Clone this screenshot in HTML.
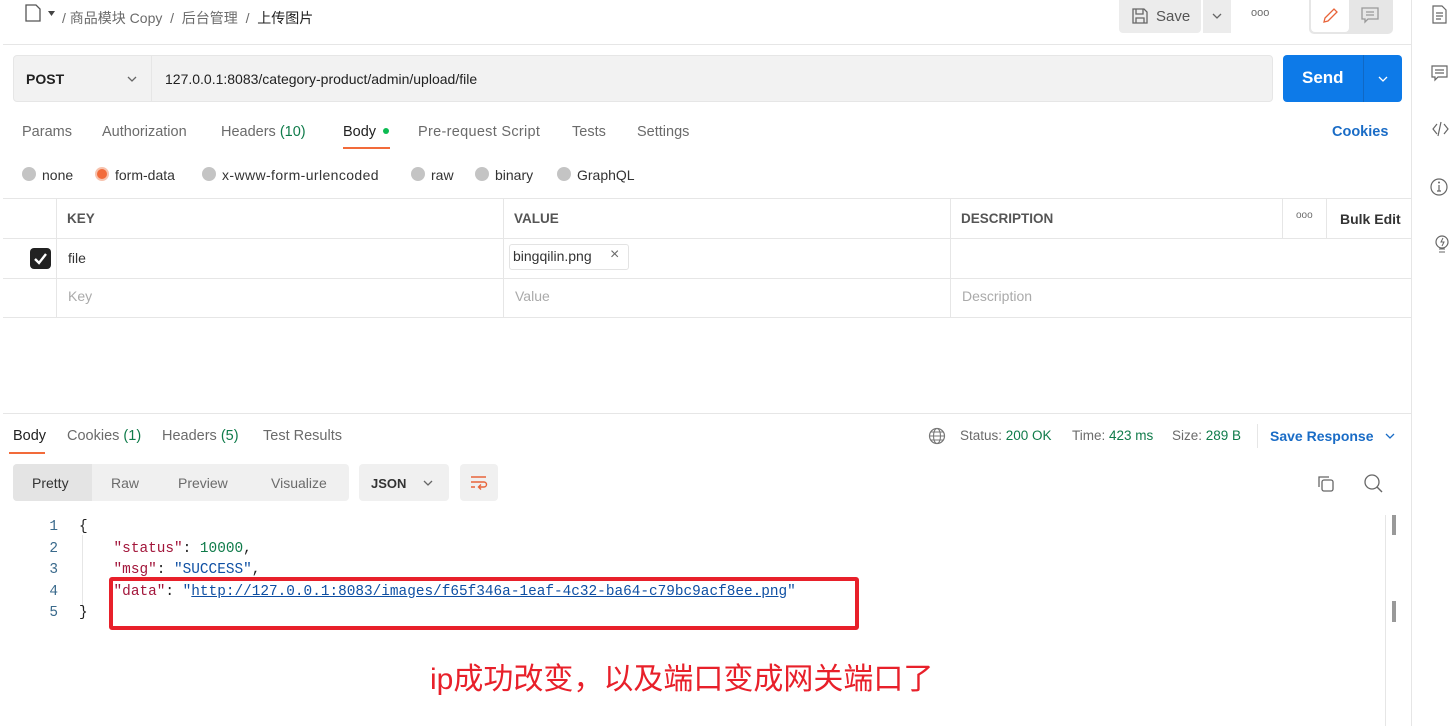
<!DOCTYPE html>
<html><head><meta charset="utf-8">
<style>
*{box-sizing:border-box;margin:0;padding:0}
body{width:1450px;height:726px;overflow:hidden;background:#fff;font-family:"Liberation Sans","Noto Sans CJK SC",sans-serif;color:#212121;position:relative;font-size:14px}
.a{position:absolute;white-space:nowrap}
.g{color:#6b6b6b}
.gr{color:#0f7b4a}
.mono{font-family:"Liberation Mono",monospace;font-size:14.4px}
.hl{border-top:1px solid #e6e6e6}
.vl{border-left:1px solid #e6e6e6}
.radio{position:absolute;width:14px;height:14px;border-radius:50%;background:#c4c4c4}
</style></head><body>
<svg width="0" height="0" style="position:absolute"><defs><path id="chev" d="M1 1l4 4 4-4" fill="none" stroke-width="1.3"/></defs></svg>
<!-- top bar -->
<svg class="a" style="left:24px;top:4px" width="40" height="20" viewBox="0 0 40 20"><path d="M2 1h10l4 4v12H2z" fill="none" stroke="#555" stroke-width="1.3"/><path d="M24 7l7 0l-3.5 5z" fill="#444"/></svg>
<div class="a g" style="left:62px;top:8px;font-size:14px">/ 商品模块 Copy &nbsp;/ &nbsp;后台管理 &nbsp;/ &nbsp;<span style="color:#212121">上传图片</span></div>
<div class="a" style="left:1119px;top:0;width:82px;height:33px;background:#ececec;border-radius:0 0 4px 4px"></div>
<svg class="a" style="left:1131px;top:7px" width="18" height="18" viewBox="0 0 18 18"><path d="M2 2h11l3 3v11H2z M5 2v5h7V2 M5 16v-5h8v5" fill="none" stroke="#666" stroke-width="1.3"/></svg>
<div class="a g" style="left:1156px;top:8px;font-size:15px;color:#555">Save</div>
<div class="a" style="left:1203px;top:0;width:28px;height:33px;background:#ececec"></div>
<svg class="a" style="left:1212px;top:13px" width="10" height="7"><use href="#chev" stroke="#666"/></svg>
<div class="a g" style="left:1251px;top:7px;font-size:11px;letter-spacing:0px">ooo</div>
<div class="a" style="left:1309px;top:0;width:84px;height:34px;background:#e6e6e6;border-radius:0 0 5px 5px"></div>
<div class="a" style="left:1311px;top:0;width:38px;height:32px;background:#fff;border-radius:0 0 4px 4px"></div>
<svg class="a" style="left:1320px;top:5px" width="20" height="20" viewBox="0 0 20 20"><path d="M4 17l1-4L14 4l3 3-9 9z" fill="none" stroke="#e8643a" stroke-width="1.3"/></svg>
<svg class="a" style="left:1360px;top:5px" width="20" height="20" viewBox="0 0 20 20"><path d="M2 3h16v11H8l-3 3v-3H2z M6 7h8 M6 10h8" fill="none" stroke="#999" stroke-width="1.3"/></svg>
<div class="a hl" style="left:3px;top:44px;width:1408px"></div>
<!-- right sidebar -->
<div class="a vl" style="left:1411px;top:0;height:726px"></div>
<svg class="a" style="left:1430px;top:4px" width="20" height="150" viewBox="0 0 20 150"><path d="M3 2h9l4 4v13H3z M6 9h7 M6 12h7 M6 15h5" fill="none" stroke="#666" stroke-width="1.2"/><path d="M2 62h15v11H8l-3 3v-3H2z M5 66h9 M5 69h9" fill="none" stroke="#666" stroke-width="1.2"/><path d="M7 120l-4 5 4 5 M11 118l-3 14 M14 120l4 5-4 5" fill="none" stroke="#666" stroke-width="1.2"/></svg>
<svg class="a" style="left:1430px;top:176px" width="20" height="80" viewBox="0 0 20 80"><circle cx="9" cy="11" r="8" fill="none" stroke="#666" stroke-width="1.2"/><path d="M9 9v6 M7 15h4" stroke="#666" stroke-width="1.2"/><circle cx="9" cy="6.5" r="1" fill="#666"/><circle cx="12" cy="66" r="6" fill="none" stroke="#666" stroke-width="1.2"/><path d="M9 73h6 M9 76h6 M13 62l-2 4h3l-2 4" fill="none" stroke="#666" stroke-width="1"/></svg>
<!-- URL bar -->
<div class="a" style="left:13px;top:55px;width:1260px;height:47px;background:#f2f2f2;border:1px solid #e6e6e6;border-radius:4px"></div>
<div class="a vl" style="left:151px;top:56px;height:45px"></div>
<div class="a" style="left:26px;top:71px;font-weight:bold;font-size:14px">POST</div>
<svg class="a" style="left:127px;top:76px" width="10" height="7"><use href="#chev" stroke="#666"/></svg>
<div class="a" style="left:165px;top:71px;font-size:14px">127.0.0.1:8083/category-product/admin/upload/file</div>
<div class="a" style="left:1283px;top:55px;width:119px;height:47px;background:#0d7ae8;border-radius:4px"></div>
<div class="a" style="left:1363px;top:55px;height:47px;border-left:1px solid #1068c4"></div>
<div class="a" style="left:1302px;top:68px;color:#fff;font-weight:bold;font-size:17px">Send</div>
<svg class="a" style="left:1378px;top:76px" width="10" height="7"><use href="#chev" stroke="#fff"/></svg>
<!-- tabs -->
<div class="a g" style="left:22px;top:124px;font-size:14.5px">Params</div>
<div class="a g" style="left:102px;top:124px;font-size:14.5px">Authorization</div>
<div class="a g" style="left:221px;top:124px;font-size:14.5px">Headers <span class="gr">(10)</span></div>
<div class="a" style="left:343px;top:124px;font-size:14.5px">Body</div>
<div class="a" style="left:383px;top:128px;width:6px;height:6px;border-radius:50%;background:#0cbb52"></div>
<div class="a" style="left:343px;top:147px;width:47px;height:2px;background:#f26b3a"></div>
<div class="a g" style="left:418px;top:124px;font-size:14.5px;letter-spacing:0.3px">Pre-request Script</div>
<div class="a g" style="left:572px;top:124px;font-size:14.5px">Tests</div>
<div class="a g" style="left:637px;top:124px;font-size:14.5px">Settings</div>
<div class="a" style="left:1332px;top:124px;color:#1a6cc6;font-weight:bold;font-size:14.5px">Cookies</div>
<!-- radios -->
<div class="radio" style="left:22px;top:167px"></div><div class="a" style="left:42px;top:167px;color:#333">none</div>
<div class="radio" style="left:95px;top:167px;background:#f26b3a;border:2px solid #f7c3ae"></div><div class="a" style="left:115px;top:167px;color:#333">form-data</div>
<div class="radio" style="left:202px;top:167px"></div><div class="a" style="left:222px;top:167px;color:#333;letter-spacing:0.4px">x-www-form-urlencoded</div>
<div class="radio" style="left:411px;top:167px"></div><div class="a" style="left:431px;top:167px;color:#333">raw</div>
<div class="radio" style="left:475px;top:167px"></div><div class="a" style="left:495px;top:167px;color:#333">binary</div>
<div class="radio" style="left:557px;top:167px"></div><div class="a" style="left:577px;top:167px;color:#333">GraphQL</div>
<!-- table -->
<div class="a hl" style="left:3px;top:198px;width:1408px"></div>
<div class="a hl" style="left:3px;top:238px;width:1408px"></div>
<div class="a hl" style="left:3px;top:278px;width:1408px"></div>
<div class="a hl" style="left:3px;top:317px;width:1408px"></div>
<div class="a vl" style="left:56px;top:198px;height:119px"></div>
<div class="a vl" style="left:503px;top:198px;height:119px"></div>
<div class="a vl" style="left:950px;top:198px;height:119px"></div>
<div class="a vl" style="left:1282px;top:198px;height:40px"></div>
<div class="a vl" style="left:1326px;top:198px;height:40px"></div>
<div class="a" style="left:67px;top:211px;color:#555;font-weight:bold;font-size:13.5px">KEY</div>
<div class="a" style="left:514px;top:211px;color:#555;font-weight:bold;font-size:13.5px">VALUE</div>
<div class="a" style="left:961px;top:211px;color:#555;font-weight:bold;font-size:13.5px">DESCRIPTION</div>
<div class="a g" style="left:1296px;top:210px;font-size:10px">ooo</div>
<div class="a" style="left:1340px;top:211px;font-weight:bold;font-size:14px;color:#333">Bulk Edit</div>
<div class="a" style="left:30px;top:248px;width:21px;height:21px;background:#222;border-radius:4px"></div>
<svg class="a" style="left:30px;top:248px" width="21" height="21"><path d="M5 11l4 4 7-9" fill="none" stroke="#fff" stroke-width="2.4"/></svg>
<div class="a" style="left:68px;top:250px;color:#333">file</div>
<div class="a" style="left:509px;top:244px;width:120px;height:26px;border:1px solid #e3e3e3;border-radius:3px"></div>
<div class="a" style="left:513px;top:248px;color:#333">bingqilin.png</div>
<div class="a g" style="left:610px;top:246px;font-size:16px">×</div>
<div class="a" style="left:68px;top:288px;color:#aaa">Key</div>
<div class="a" style="left:515px;top:288px;color:#aaa">Value</div>
<div class="a" style="left:962px;top:288px;color:#aaa">Description</div>
<!-- response -->
<div class="a hl" style="left:3px;top:413px;width:1408px"></div>
<div class="a" style="left:13px;top:428px;color:#212121;font-size:14.5px">Body</div>
<div class="a" style="left:9px;top:452px;width:36px;height:2px;background:#f26b3a"></div>
<div class="a g" style="left:67px;top:428px;font-size:14.5px">Cookies <span class="gr">(1)</span></div>
<div class="a g" style="left:162px;top:428px;font-size:14.5px">Headers <span class="gr">(5)</span></div>
<div class="a g" style="left:263px;top:428px;font-size:14.5px">Test Results</div>
<svg class="a" style="left:928px;top:427px" width="18" height="18" viewBox="0 0 18 18"><circle cx="9" cy="9" r="7.5" fill="none" stroke="#777" stroke-width="1.2"/><ellipse cx="9" cy="9" rx="3.5" ry="7.5" fill="none" stroke="#777" stroke-width="1.1"/><path d="M1.5 9h15 M3 5h12 M3 13h12" stroke="#777" stroke-width="1"/></svg>
<div class="a g" style="left:960px;top:428px;font-size:13.5px">Status: <span class="gr">200 OK</span></div>
<div class="a g" style="left:1072px;top:428px;font-size:13.5px">Time: <span class="gr">423 ms</span></div>
<div class="a g" style="left:1172px;top:428px;font-size:13.5px">Size: <span class="gr">289 B</span></div>
<div class="a vl" style="left:1257px;top:424px;height:24px"></div>
<div class="a" style="left:1270px;top:428px;color:#1a6cc6;font-weight:bold;font-size:14px">Save Response</div>
<svg class="a" style="left:1385px;top:433px" width="10" height="7"><use href="#chev" stroke="#1a6cc6"/></svg>
<div class="a" style="left:13px;top:464px;width:336px;height:37px;background:#f0f0f0;border-radius:4px"></div>
<div class="a" style="left:13px;top:464px;width:79px;height:37px;background:#e4e4e4;border-radius:4px 0 0 4px"></div>
<div class="a" style="left:32px;top:475px;color:#333">Pretty</div>
<div class="a g" style="left:111px;top:475px">Raw</div>
<div class="a g" style="left:178px;top:475px">Preview</div>
<div class="a g" style="left:271px;top:475px">Visualize</div>
<div class="a" style="left:359px;top:464px;width:90px;height:37px;background:#f0f0f0;border-radius:4px"></div>
<div class="a" style="left:371px;top:476px;color:#333;font-weight:bold;font-size:13px">JSON</div>
<svg class="a" style="left:423px;top:480px" width="10" height="7"><use href="#chev" stroke="#666"/></svg>
<div class="a" style="left:460px;top:464px;width:38px;height:37px;background:#f0f0f0;border-radius:4px"></div>
<svg class="a" style="left:469px;top:473px" width="20" height="20" viewBox="0 0 20 20"><path d="M2 4h15 M2 9h13a2.5 2.5 0 0 1 0 5h-5 M12 11.5l-2.5 2.5 2.5 2.5 M2 14h4" fill="none" stroke="#e8643a" stroke-width="1.4"/></svg>
<svg class="a" style="left:1316px;top:474px" width="20" height="20" viewBox="0 0 20 20"><path d="M3 13V3h10" fill="none" stroke="#666" stroke-width="1.3"/><rect x="6" y="6" width="11" height="11" rx="2" fill="none" stroke="#666" stroke-width="1.3"/></svg>
<svg class="a" style="left:1363px;top:473px" width="22" height="22" viewBox="0 0 22 22"><circle cx="9" cy="9" r="7" fill="none" stroke="#666" stroke-width="1.3"/><path d="M14 14l5 5" stroke="#666" stroke-width="1.4"/></svg>
<!-- code -->
<div class="a vl" style="left:1385px;top:515px;height:211px"></div>
<div class="a" style="left:1392px;top:515px;width:4px;height:20px;background:#999"></div>
<div class="a" style="left:1392px;top:601px;width:4px;height:21px;background:#999"></div>
<div class="a vl" style="left:82px;top:535px;height:73px"></div>
<div class="a mono" style="left:46px;top:517px;color:#3a6a8c;line-height:21.6px;text-align:right;width:12px">1<br>2<br>3<br>4<br>5</div>
<div class="a mono" style="left:79px;top:517px;line-height:21.6px;white-space:pre;color:#212121">{
    <span style="color:#a2153a">"status"</span>: <span style="color:#0f7b4a">10000</span>,
    <span style="color:#a2153a">"msg"</span>: <span style="color:#0e4fa3">"SUCCESS"</span>,
    <span style="color:#a2153a">"data"</span>: <span style="color:#0e4fa3">"<u>http://127.0.0.1:8083/images/f65f346a-1eaf-4c32-ba64-c79bc9acf8ee.png</u>"</span>
}</div>
<div class="a" style="left:109px;top:577px;width:750px;height:53px;border:4px solid #e8202a;border-radius:3px"></div>
<div class="a" style="left:430px;top:654px;color:#e8202a;font-size:30px">ip成功改变，以及端口变成网关端口了</div>
</body></html>
